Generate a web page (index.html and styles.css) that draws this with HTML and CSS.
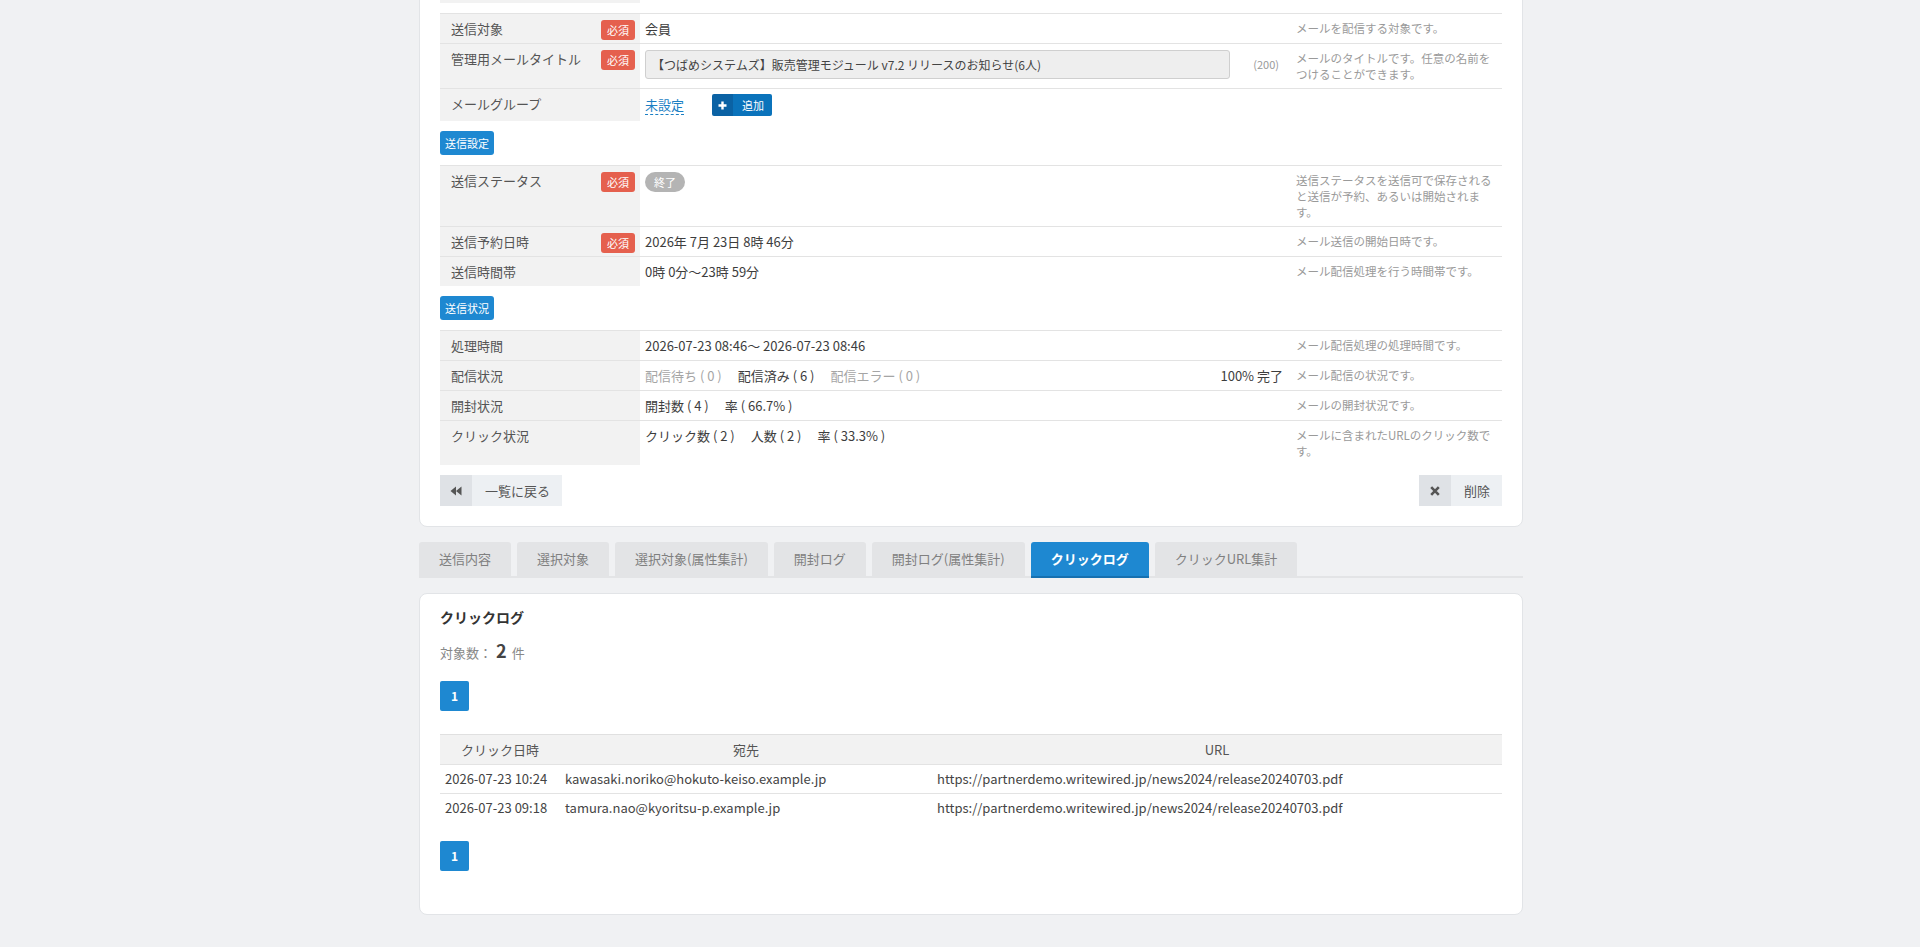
FILE: index.html
```html
<!DOCTYPE html>
<html lang="ja">
<head>
    <meta charset="utf-8">
    <title>メール配信詳細</title>
    <link rel="stylesheet" href="styles.css">
</head>
<body>
<div class="page">
    <div class="card detail-card">
        <table class="form-table">
            <colgroup><col class="c-label"><col><col class="c-desc"></colgroup>
            <tr>
                <th>&nbsp;</th>
                <td class="val">&nbsp;</td>
                <td class="desc"></td>
            </tr>
        </table>

        <table class="form-table spaced">
            <colgroup><col class="c-label"><col><col class="c-desc"></colgroup>
            <tr>
                <th><div class="th-inner"><span>送信対象</span><span class="req">必須</span></div></th>
                <td class="val">会員</td>
                <td class="desc">メールを配信する対象です。</td>
            </tr>
            <tr>
                <th><div class="th-inner"><span>管理用メールタイトル</span><span class="req">必須</span></div></th>
                <td class="val">
                    <div class="input-row">
                        <input type="text" class="text-input" value="【つばめシステムズ】販売管理モジュール v7.2 リリースのお知らせ(6人)" readonly>
                        <span class="counter">(200)</span>
                    </div>
                </td>
                <td class="desc">メールのタイトルです。任意の名前をつけることができます。</td>
            </tr>
            <tr>
                <th>メールグループ</th>
                <td class="val">
                    <div class="group-row">
                        <a class="dash-link">未設定</a>
                        <span class="btn-add">
                            <span class="ico"><svg width="9" height="9" viewBox="0 0 9 9"><path d="M4.5 0.5v8M0.5 4.5h8" stroke="#fff" stroke-width="2.4"/></svg></span>
                            <span class="lbl">追加</span>
                        </span>
                    </div>
                </td>
                <td class="desc"></td>
            </tr>
        </table>

        <div class="sec-tag">送信設定</div>

        <table class="form-table">
            <colgroup><col class="c-label"><col><col class="c-desc"></colgroup>
            <tr>
                <th><div class="th-inner"><span>送信ステータス</span><span class="req">必須</span></div></th>
                <td class="val"><span class="pill">終了</span></td>
                <td class="desc">送信ステータスを送信可で保存されると送信が予約、あるいは開始されます。</td>
            </tr>
            <tr>
                <th><div class="th-inner"><span>送信予約日時</span><span class="req">必須</span></div></th>
                <td class="val">2026年 7月 23日 8時 46分</td>
                <td class="desc">メール送信の開始日時です。</td>
            </tr>
            <tr>
                <th>送信時間帯</th>
                <td class="val">0時 0分～23時 59分</td>
                <td class="desc">メール配信処理を行う時間帯です。</td>
            </tr>
        </table>

        <div class="sec-tag">送信状況</div>

        <table class="form-table">
            <colgroup><col class="c-label"><col><col class="c-desc"></colgroup>
            <tr>
                <th>処理時間</th>
                <td class="val">2026-07-23 08:46～ 2026-07-23 08:46</td>
                <td class="desc">メール配信処理の処理時間です。</td>
            </tr>
            <tr>
                <th>配信状況</th>
                <td class="val">
                    <div class="split">
                        <div class="stats">
                            <span class="muted">配信待ち ( 0 )</span>
                            <span>配信済み ( 6 )</span>
                            <span class="muted">配信エラー ( 0 )</span>
                        </div>
                        <span>100% 完了</span>
                    </div>
                </td>
                <td class="desc">メール配信の状況です。</td>
            </tr>
            <tr>
                <th>開封状況</th>
                <td class="val">
                    <div class="stats">
                        <span>開封数 ( 4 )</span>
                        <span>率 ( 66.7% )</span>
                    </div>
                </td>
                <td class="desc">メールの開封状況です。</td>
            </tr>
            <tr>
                <th>クリック状況</th>
                <td class="val">
                    <div class="stats">
                        <span>クリック数 ( 2 )</span>
                        <span>人数 ( 2 )</span>
                        <span>率 ( 33.3% )</span>
                    </div>
                </td>
                <td class="desc">メールに含まれたURLのクリック数です。</td>
            </tr>
        </table>

        <div class="actions">
            <span class="btn-plain">
                <span class="ico"><svg width="12" height="10" viewBox="0 0 12 10"><path d="M6 0.5L0.5 5L6 9.5ZM11.5 0.5L6 5L11.5 9.5Z" fill="#555"/></svg></span>
                <span class="lbl">一覧に戻る</span>
            </span>
            <span class="btn-plain">
                <span class="ico"><svg width="10" height="10" viewBox="0 0 10 10"><path d="M1.2 1.2L8.8 8.8M8.8 1.2L1.2 8.8" stroke="#555" stroke-width="2.6"/></svg></span>
                <span class="lbl">削除</span>
            </span>
        </div>
    </div>

    <div class="tabs">
        <span class="tab">送信内容</span>
        <span class="tab">選択対象</span>
        <span class="tab">選択対象(属性集計)</span>
        <span class="tab">開封ログ</span>
        <span class="tab">開封ログ(属性集計)</span>
        <span class="tab active">クリックログ</span>
        <span class="tab">クリックURL集計</span>
    </div>

    <div class="card log-card">
        <h3 class="panel-title">クリックログ</h3>
        <div class="count">対象数：<strong>2</strong><span class="unit">件</span></div>

        <div class="pager"><span class="page-num">1</span></div>

        <table class="log-table">
            <colgroup><col class="c-date"><col class="c-to"><col></colgroup>
            <tr>
                <th>クリック日時</th>
                <th>宛先</th>
                <th>URL</th>
            </tr>
            <tr>
                <td>2026-07-23 10:24</td>
                <td>kawasaki.noriko@hokuto-keiso.example.jp</td>
                <td>https://partnerdemo.writewired.jp/news2024/release20240703.pdf</td>
            </tr>
            <tr>
                <td>2026-07-23 09:18</td>
                <td>tamura.nao@kyoritsu-p.example.jp</td>
                <td>https://partnerdemo.writewired.jp/news2024/release20240703.pdf</td>
            </tr>
        </table>

        <div class="pager bottom"><span class="page-num">1</span></div>
    </div>
</div>
</body>
</html>
```

FILE: styles.css
```css
* {
    box-sizing: border-box;
}
body {
    margin: 0;
    background-color: #f0f1f3;
    font-family: "Noto Sans CJK JP", "Noto Sans", sans-serif;
    font-size: 13px;
    color: #3d3d3d;
}
.page {
    width: 1104px;
    margin-left: 419px;
    padding-bottom: 40px;
}
.card {
    background-color: #fff;
    border: 1px solid #e2e4e7;
    border-radius: 8px;
    padding: 20px;
}
.detail-card {
    margin-top: -48px;
}

/* form tables */
.form-table {
    width: 100%;
    border-collapse: collapse;
    table-layout: fixed;
}
.form-table.spaced {
    margin-top: 10px;
}
.form-table tr {
    border-top: 1px solid #e3e3e3;
}
.c-label {
    width: 200px;
}
.c-desc {
    width: 214px;
}
.form-table th {
    background-color: #f2f2f2;
    color: #555;
    font-weight: normal;
    text-align: left;
    vertical-align: top;
    line-height: 17px;
    padding: 6px 5px 6px 11px;
}
.th-inner {
    display: flex;
    justify-content: space-between;
    align-items: flex-start;
}
.req {
    width: 34px;
    height: 20px;
    line-height: 20px;
    text-align: center;
    font-size: 11px;
    color: #fff;
    background-color: #e5604e;
    border-radius: 3px;
    margin-bottom: -3px;
}
.form-table td {
    vertical-align: top;
}
.val {
    line-height: 17px;
    padding: 6px 5px;
}
.desc {
    font-size: 11.5px;
    line-height: 16px;
    color: #9a9a9a;
    padding: 6px 6px 6px 8px;
}
.input-row {
    display: flex;
    align-items: center;
}
.text-input {
    width: 585px;
    height: 29px;
    padding: 0 6px;
    border: 1px solid #cfcfcf;
    border-radius: 3px;
    background-color: #eeeeee;
    font-family: inherit;
    font-size: 12px;
    color: #444;
    outline: none;
}
.counter {
    flex: 1;
    text-align: right;
    padding-right: 4px;
    font-size: 11px;
    color: #999;
}
.group-row {
    display: flex;
    align-items: center;
}
.dash-link {
    color: #1b7fc4;
    border-bottom: 1px dashed #1b7fc4;
    line-height: 17px;
    padding-bottom: 1px;
}
.btn-add {
    display: inline-flex;
    height: 22px;
    margin: -1px 0 -1px 28px;
    border-radius: 2px;
    overflow: hidden;
    color: #fff;
    font-size: 11px;
}
.btn-add .ico {
    width: 21px;
    background-color: #0b62a4;
    display: flex;
    align-items: center;
    justify-content: center;
}
.btn-add .lbl {
    background-color: #0b73bb;
    line-height: 22px;
    padding: 0 8px 0 9px;
}
.pill {
    display: inline-block;
    width: 40px;
    height: 20px;
    line-height: 20px;
    text-align: center;
    font-size: 11px;
    color: #fff;
    background-color: #b4b4b4;
    border-radius: 10px;
    margin-bottom: -3px;
}
.sec-tag {
    width: fit-content;
    margin: 10px 0;
    padding: 0 5px;
    line-height: 24px;
    font-size: 11px;
    color: #fff;
    background-color: #1e88d1;
    border-radius: 3px;
}
.split {
    display: flex;
    justify-content: space-between;
}
.stats {
    display: flex;
    gap: 16px;
}
.muted {
    color: #a5a5a5;
}

/* bottom buttons */
.actions {
    display: flex;
    justify-content: space-between;
    margin-top: 10px;
}
.btn-plain {
    display: inline-flex;
    height: 31px;
    background-color: #edf0f3;
    color: #555;
}
.btn-plain .ico {
    width: 32px;
    background-color: #dfe2e6;
    display: flex;
    align-items: center;
    justify-content: center;
}
.btn-plain .lbl {
    line-height: 31px;
    padding: 0 12px 0 13px;
}

/* tabs */
.tabs {
    display: flex;
    gap: 6px;
    margin-top: 15px;
    border-bottom: 2px solid #e3e4e6;
}
.tab {
    height: 34px;
    line-height: 34px;
    padding: 0 20px;
    background-color: #e3e4e6;
    color: #808080;
    border-radius: 3px 3px 0 0;
}
.tab.active {
    height: 36px;
    margin-bottom: -2px;
    background-color: #1e88d1;
    border-bottom: 2px solid #1670b0;
    color: #fff;
    font-weight: bold;
}

/* log panel */
.log-card {
    margin-top: 15px;
    padding-top: 14px;
}
.panel-title {
    margin: 0;
    font-size: 14px;
    line-height: 18px;
    color: #333;
}
.count {
    margin-top: 14px;
    line-height: 20px;
    color: #888;
}
.count strong {
    font-size: 18px;
    color: #444;
    margin-left: 4px;
}
.count .unit {
    margin-left: 5px;
}
.pager {
    margin-top: 18px;
    display: flex;
}
.pager.bottom {
    margin-top: 19px;
    margin-bottom: 23px;
}
.page-num {
    width: 29px;
    height: 30px;
    line-height: 30px;
    text-align: center;
    font-size: 12px;
    font-weight: bold;
    color: #fff;
    background-color: #1e88d1;
    border-radius: 2px;
}
.log-table {
    width: 100%;
    margin-top: 23px;
    border-collapse: collapse;
    table-layout: fixed;
}
.c-date {
    width: 120px;
}
.c-to {
    width: 372px;
}
.log-table th {
    height: 30px;
    background-color: #f2f2f2;
    color: #555;
    font-weight: normal;
    border-top: 1px solid #e0e0e0;
    padding: 0 5px;
}
.log-table td {
    border-top: 1px solid #e3e3e3;
    padding: 6px 5px;
    line-height: 16px;
    color: #444;
    white-space: nowrap;
}
```
